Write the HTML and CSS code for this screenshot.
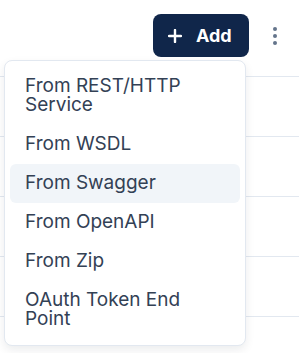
FILE: index.html
```html
<!DOCTYPE html>
<html lang="en">
<head>
    <meta charset="UTF-8">
    <title>Services</title>
    <link rel="stylesheet" href="styles.css">
</head>
<body>
    <div class="toolbar">
        <button class="add-btn">
            <svg width="14" height="14" viewBox="0 0 14 14"><path d="M7 1v12M1 7h12" stroke="#fff" stroke-width="2.4" stroke-linecap="round"/></svg>
            Add
        </button>
        <button class="more-btn" aria-label="More">
            <span></span><span></span><span></span>
        </button>
    </div>

    <div class="rows">
        <div class="row"></div>
        <div class="row"></div>
        <div class="row"></div>
        <div class="row"></div>
        <div class="row"></div>
    </div>

    <ul class="menu">
        <li>From REST/HTTP Service</li>
        <li>From WSDL</li>
        <li class="active">From Swagger</li>
        <li>From OpenAPI</li>
        <li>From Zip</li>
        <li>OAuth Token End Point</li>
    </ul>
</body>
</html>
```
FILE: styles.css
```css
body {
    margin: 0;
    height: 353px;
    overflow: hidden;
    position: relative;
    font-family: Inter, "Noto Sans", sans-serif;
    background: #fff;
}

/* Top bar */
.toolbar {
    display: flex;
    justify-content: flex-end;
    align-items: center;
    gap: 14px;
    padding: 14px 12px 0 0;
}

.add-btn {
    display: flex;
    align-items: center;
    gap: 14px;
    height: 43px;
    width: 96px;
    padding: 0 0 0 15px;
    border: none;
    border-radius: 8px;
    background: #10264a;
    color: #fff;
    font-family: inherit;
    font-size: 18px;
    font-weight: 700;
}

.more-btn {
    display: flex;
    flex-direction: column;
    align-items: center;
    gap: 3px;
    width: 24px;
    padding: 0;
    border: none;
    background: none;
}

.more-btn span {
    width: 4px;
    height: 4px;
    border-radius: 50%;
    background: #64748b;
}

/* Background list */
.rows {
    margin-top: 19px;
}

.row {
    height: 60px;
    border-top: 1px solid #e2e8f0;
    box-sizing: border-box;
}

/* Dropdown */
.menu {
    position: absolute;
    top: 60px;
    left: 4px;
    width: 242px;
    box-sizing: border-box;
    margin: 0;
    padding: 6px 5px;
    list-style: none;
    background: #fff;
    border: 1px solid #e2e8f0;
    border-radius: 8px;
    box-shadow: 0 4px 10px rgba(15, 23, 42, 0.08);
}

.menu li {
    padding: 9px 15px 11px;
    font-size: 19px;
    line-height: 19px;
    color: #334155;
    border-radius: 6px;
}

.menu li.active {
    background: #f1f5f9;
}
```
